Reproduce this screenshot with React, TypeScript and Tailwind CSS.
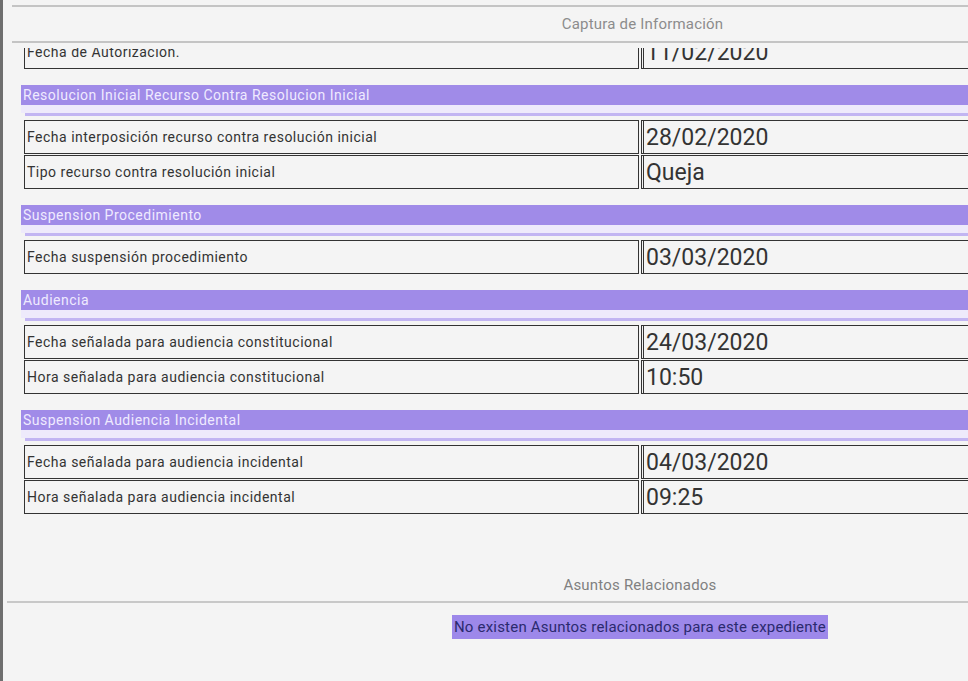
const SECTIONS: { title: string; rows: [string, string][] }[] = [
  {
    title: 'Resolucion Inicial Recurso Contra Resolucion Inicial',
    rows: [
      ['Fecha interposición recurso contra resolución inicial', '28/02/2020'],
      ['Tipo recurso contra resolución inicial', 'Queja'],
    ],
  },
  {
    title: 'Suspension Procedimiento',
    rows: [['Fecha suspensión procedimiento', '03/03/2020']],
  },
  {
    title: 'Audiencia',
    rows: [
      ['Fecha señalada para audiencia constitucional', '24/03/2020'],
      ['Hora señalada para audiencia constitucional', '10:50'],
    ],
  },
  {
    title: 'Suspension Audiencia Incidental',
    rows: [
      ['Fecha señalada para audiencia incidental', '04/03/2020'],
      ['Hora señalada para audiencia incidental', '09:25'],
    ],
  },
]

function Row({ label, value }: { label: string; value: string }) {
  return (
    <div className="ml-[3px] flex h-[34px] gap-[2px]">
      <div className="flex w-[615px] items-center border border-[#333] pl-[2px] text-[14px] tracking-[0.5px] text-[#333]">
        {label}
      </div>
      <div className="flex flex-1 items-center border border-l-[3px] border-double border-[#333] pl-[2px] text-[23px] leading-none text-[#333]">
        {value}
      </div>
    </div>
  )
}

function Section({ title, rows }: { title: string; rows: [string, string][] }) {
  return (
    <div className="mt-[16px]">
      <div className="flex h-[20px] items-center bg-[#a08be8] pl-[2px] text-[14px] tracking-[0.5px] text-[#efeaff]">
        {title}
      </div>
      <div className="h-[8px] bg-[#eeeafb]" />
      <div className="ml-[4px] h-[3px] bg-[#c2b5f2]" />
      <div className="mt-[4px] flex flex-col gap-[1px]">
        {rows.map(([l, v]) => (
          <Row key={l} label={l} value={v} />
        ))}
      </div>
    </div>
  )
}

export default function App() {
  return (
    <div
      className="relative h-[681px] w-[968px] overflow-hidden border-l-[3px] border-[#6e6e6e] bg-[#f4f4f4]"
      style={{ fontFamily: 'Roboto, "Noto Sans", sans-serif' }}
    >
      <div className="w-[1270px]">
        <div className="ml-[9px] mt-[5px] border-t-2 border-[#c4c4c4]">
          <div className="flex h-[34px] items-center justify-center text-[15px] tracking-[0.2px] text-[#8c8c8c]">
            Captura de Información
          </div>
          <div className="border-t-2 border-[#c4c4c4]" />
        </div>

        {/* scrolled panel: first row is partly hidden under the header */}
        <div className="ml-[18px] mt-[5px] h-[472px] overflow-hidden">
          <div className="-mt-[13px]">
            <Row label="Fecha de Autorización." value="11/02/2020" />
            {SECTIONS.map((s) => (
              <Section key={s.title} title={s.title} rows={s.rows} />
            ))}
          </div>
        </div>

        <div className="ml-[4px] mt-[55px]">
          <div className="flex h-[20px] items-center justify-center text-[15px] tracking-[0.2px] text-[#808080]">
            Asuntos Relacionados
          </div>
          <div className="mt-[6px] border-t-2 border-[#c8c8c8]" />
          <div className="mt-[12px] flex justify-center">
            <span className="bg-[#9d88ea] px-[2px] text-[15px] leading-[24px] tracking-[0.2px] text-[#2b2a6e]">
              No existen Asuntos relacionados para este expediente
            </span>
          </div>
        </div>
      </div>
    </div>
  )
}
